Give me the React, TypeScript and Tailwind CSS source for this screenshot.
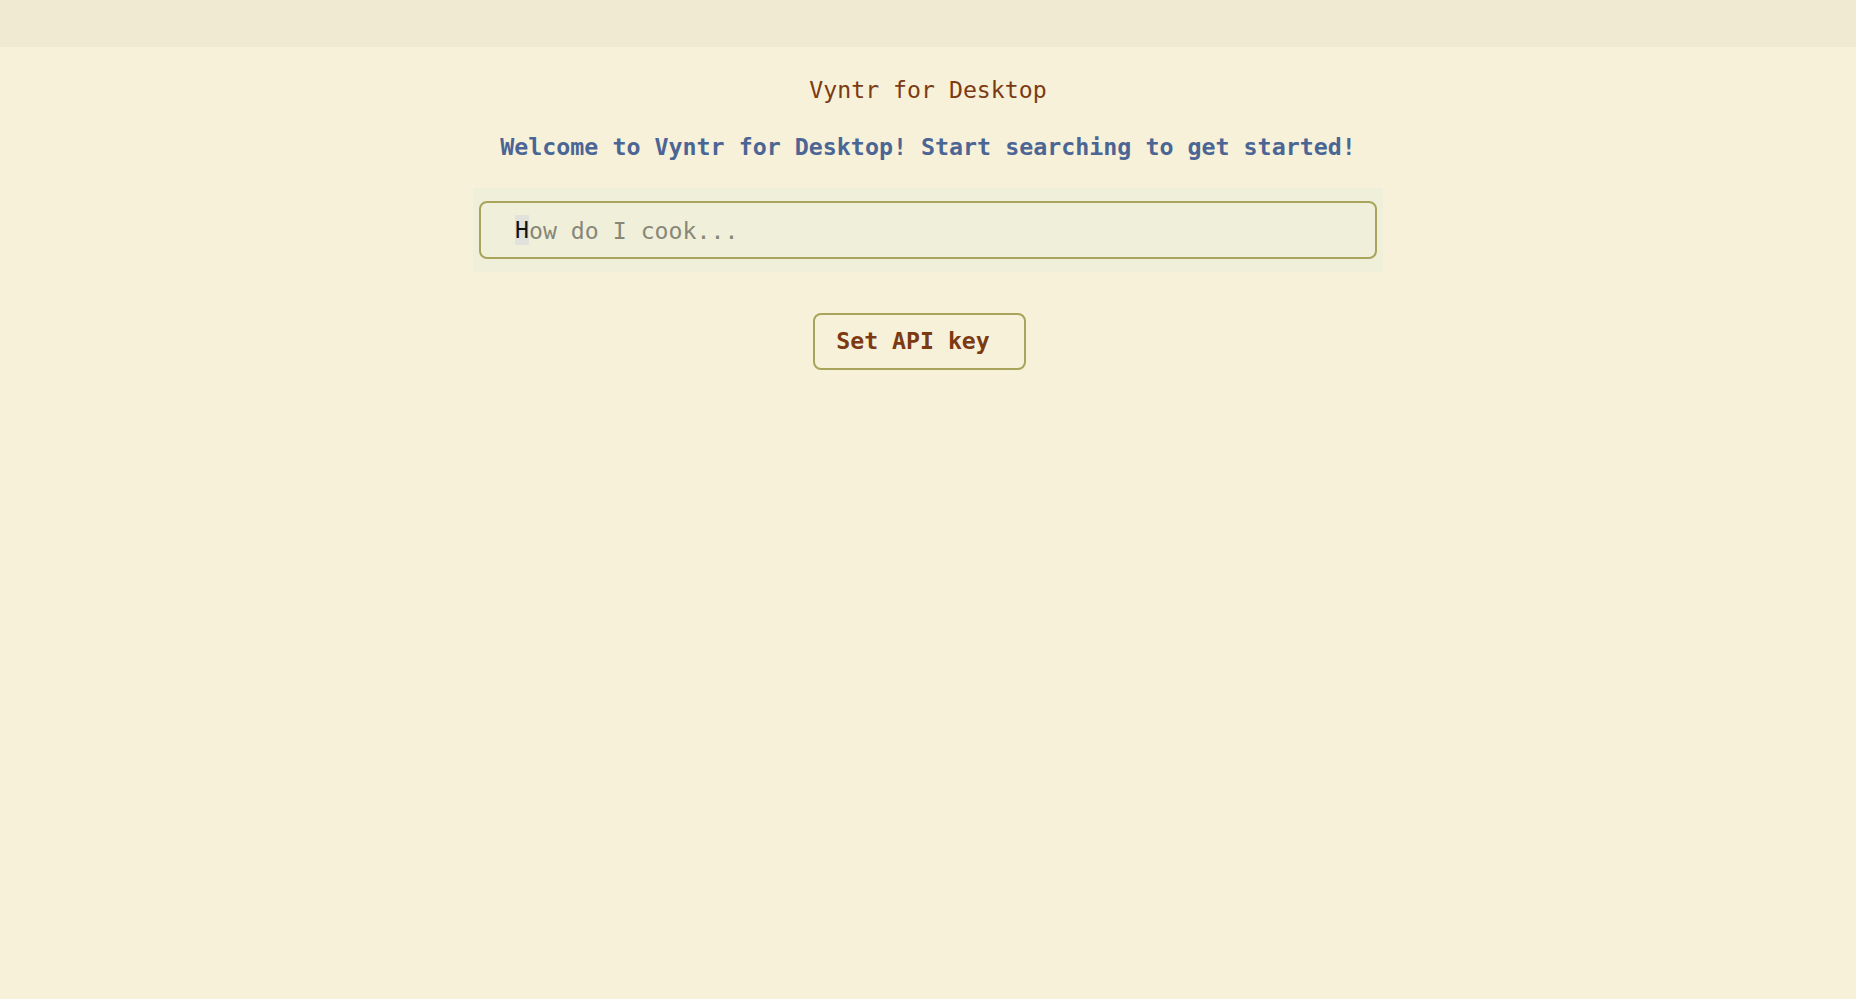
import { useState } from "react";

const mono = { fontFamily: '"DejaVu Sans Mono", "Liberation Mono", monospace' };

export default function App() {
  const [query, setQuery] = useState("");

  return (
    <div className="min-h-screen w-full bg-[#f7f1d9]" style={mono}>
      <div className="h-[47px] w-full bg-[#f0ead2]" />

      <main className="flex flex-col items-center">
        <h1 className="mt-[29px] text-[23.2px] leading-[27px] text-[#7b3a12]">Vyntr for Desktop</h1>

        <p className="mt-[30px] text-[23.3px] leading-[27px] font-bold text-[#4b6594]">
          Welcome to Vyntr for Desktop! Start searching to get started!
        </p>

        <div className="mt-[28px] w-[910px] bg-[#f0f0da] px-[6px] py-[13px]">
          <div className="relative">
            <input
              value={query}
              onChange={(e) => setQuery(e.target.value)}
              placeholder="How do I cook..."
              className="h-[58px] w-full rounded-lg border-2 border-[#a8a45b] bg-[#f0f0da] pl-[34px] text-[23.2px] text-[#222] outline-none placeholder:text-[#878777]"
              style={mono}
            />
            {/* block caret sitting on the first letter */}
            {query === "" && (
              <span className="pointer-events-none absolute left-[36px] top-[14px] bg-[#e2e2dc] text-[23.2px] leading-[30px] text-[#111]">
                H
              </span>
            )}
          </div>
        </div>

        <button className="mt-[41px] mr-[17px] h-[57px] rounded-lg border-2 border-[#a8a45b] bg-transparent pl-[21px] pr-[34px] text-[23.2px] font-bold text-[#7b3a12]">
          Set API key
        </button>
      </main>
    </div>
  );
}
